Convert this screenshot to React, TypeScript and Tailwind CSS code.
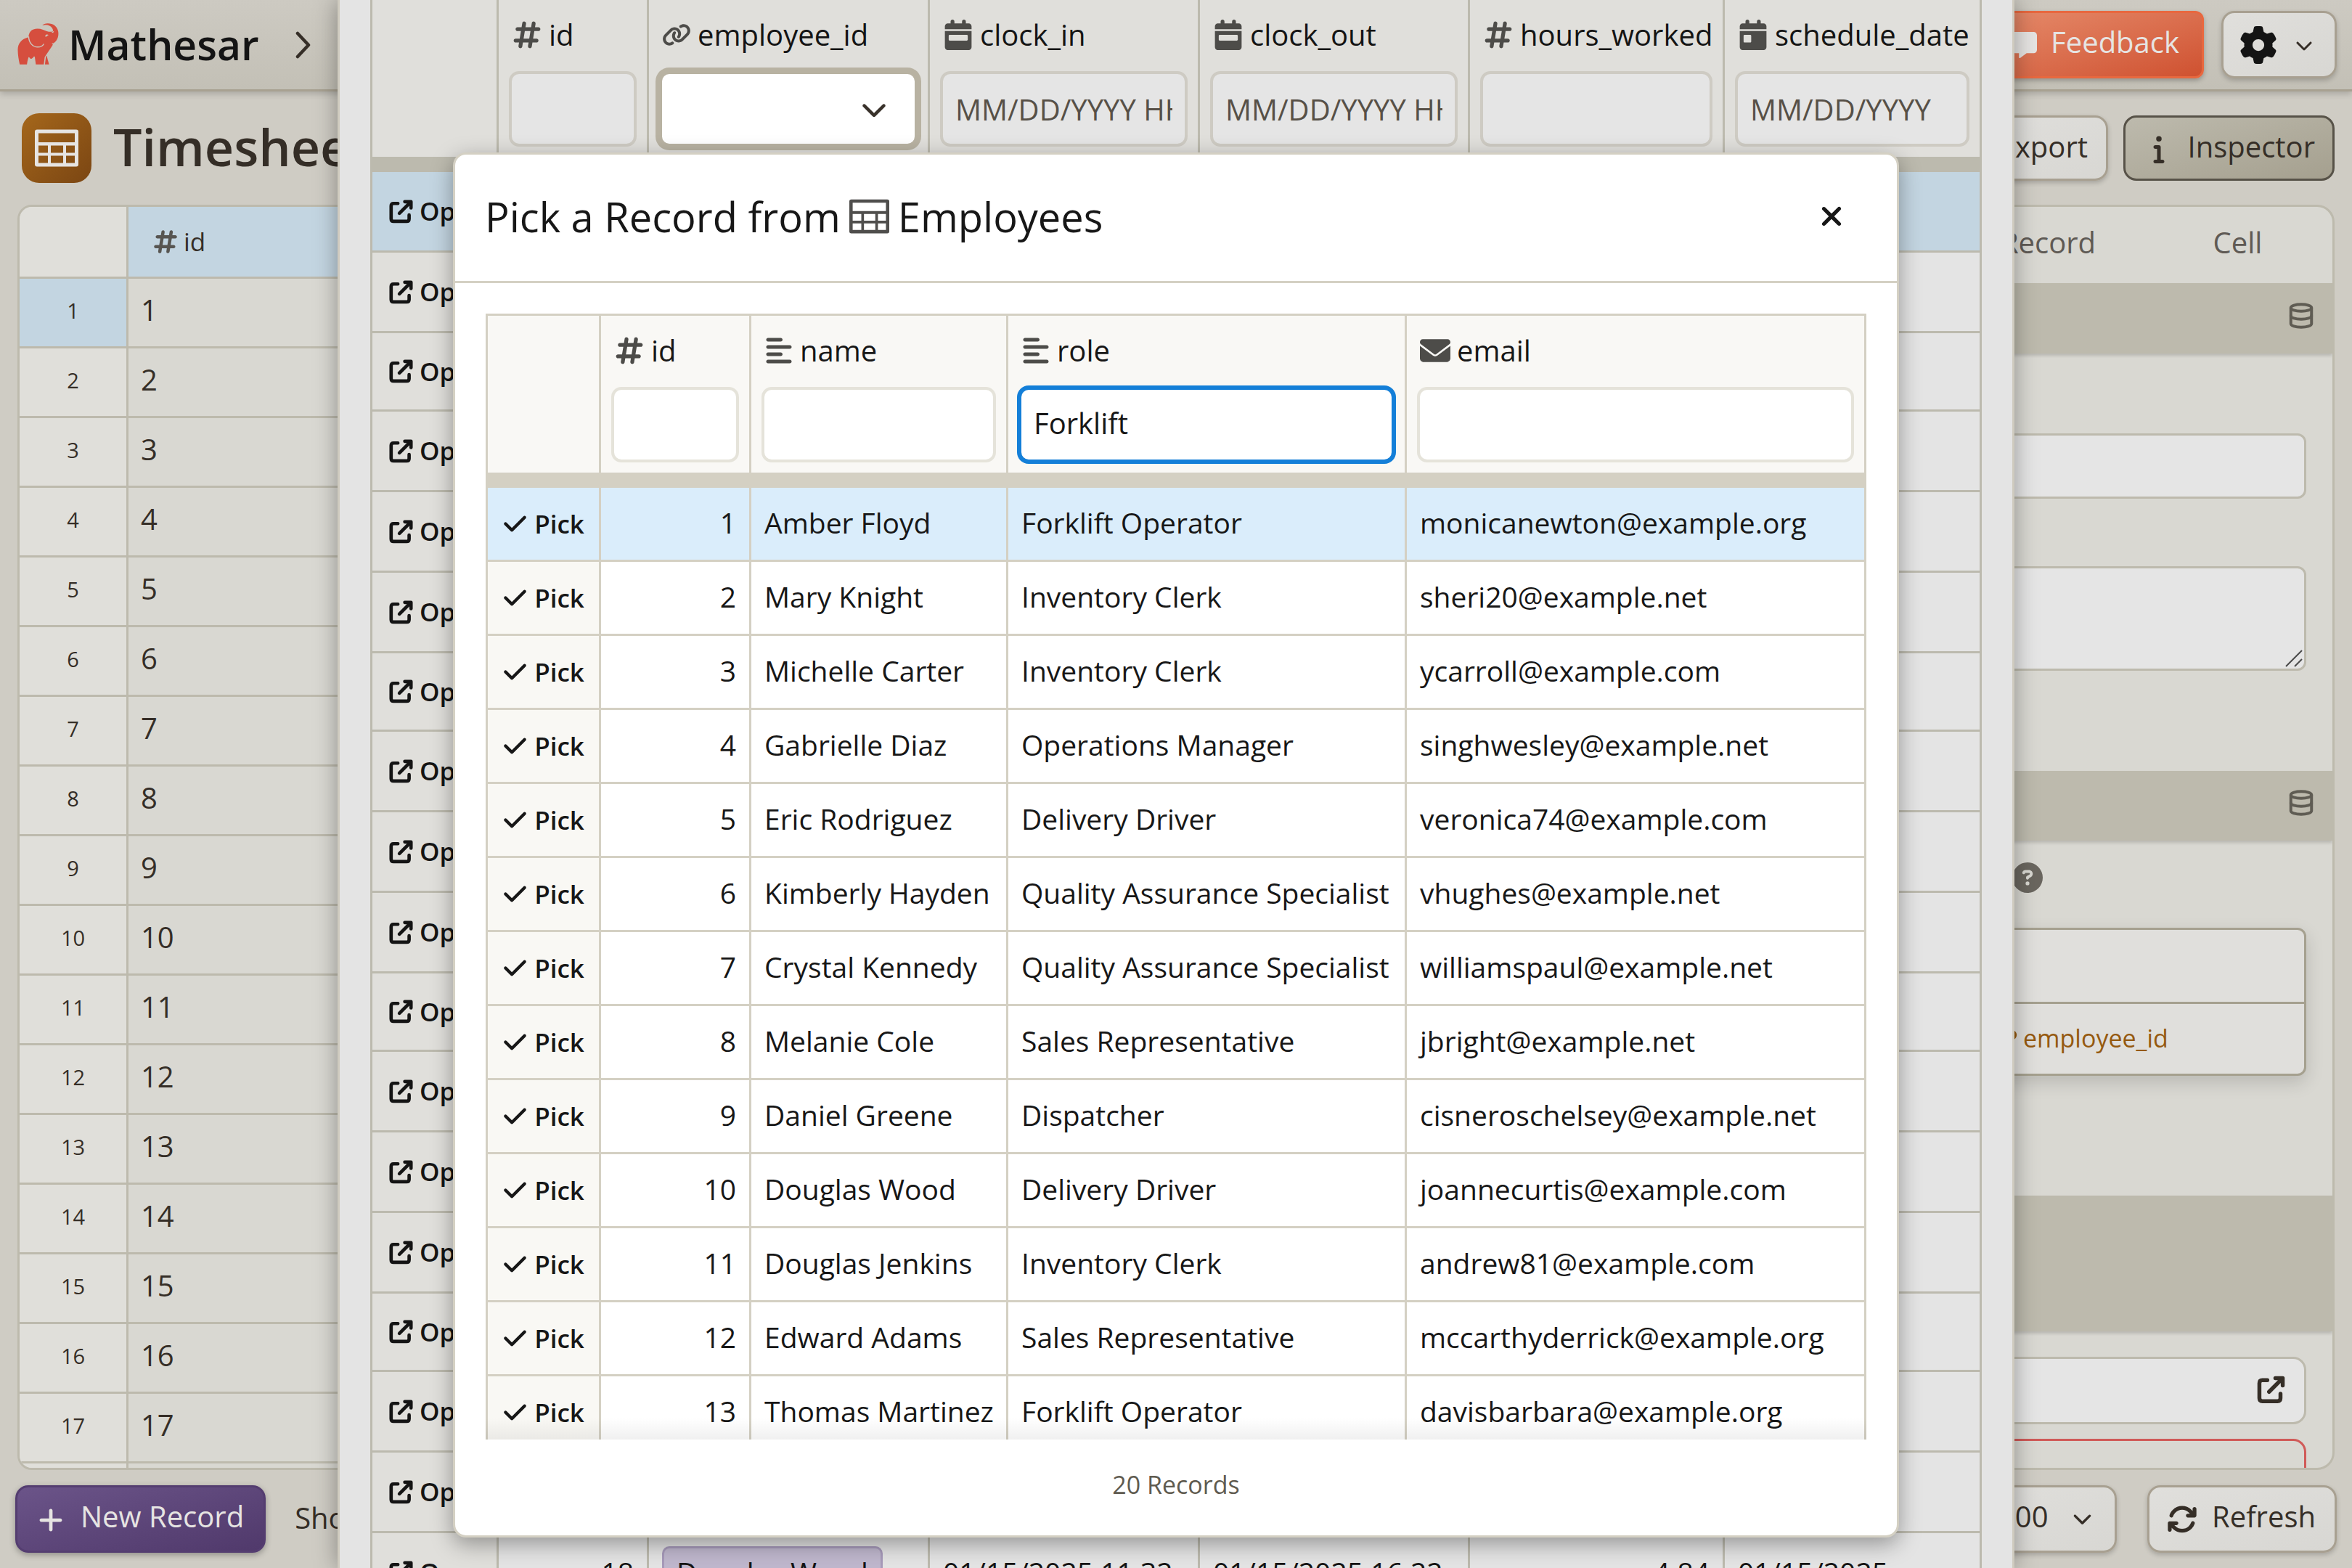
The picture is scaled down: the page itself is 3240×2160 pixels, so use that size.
import type { ReactNode } from "react";
import {
  FaAlignLeft,
  FaArrowsRotate,
  FaCalendarDay,
  FaCalendarWeek,
  FaCheck,
  FaChevronDown,
  FaCircleQuestion,
  FaEnvelope,
  FaGear,
  FaHashtag,
  FaInfo,
  FaLink,
  FaMessage,
  FaPlus,
  FaXmark,
} from "react-icons/fa6";
import { Database } from "lucide-react";

function TableIcon({ className }: { className: string }) {
  return (
    <svg viewBox="0 0 60 51" fill="currentColor" fillRule="evenodd" className={className} aria-hidden="true">
      <path d="M3 0H57Q60 0 60 3V48Q60 51 57 51H3Q0 51 0 48V3Q0 0 3 0ZM5 5V17.5H55V5ZM5 22V32H18V22ZM22 22V32H39V22ZM43 22V32H55V22ZM5 36V46H18V36ZM22 36V46H39V36ZM43 36V46H55V36Z" />
    </svg>
  );
}

function OpenIcon({ className }: { className: string }) {
  return (
    <svg
      viewBox="0 0 24 24"
      fill="none"
      stroke="currentColor"
      strokeWidth="3.2"
      strokeLinecap="round"
      strokeLinejoin="round"
      className={className}
      aria-hidden="true"
    >
      <path d="M9 4.3H5Q2.6 4.3 2.6 6.7V18.8Q2.6 21.2 5 21.2H17.2Q19.6 21.2 19.6 18.8V15.2" />
      <path d="M15.5 2.6H21.4V8.5M21 3L10.4 13.6" />
    </svg>
  );
}

function Elephant() {
  return (
    <svg viewBox="42 38 171 172" className="size-[57px]" aria-hidden="true">
      <path
        fill="#d64e3e"
        d="M87 96C58 104 43 122 43 148C43 170 47 190 51 209H81C82 200 84 190 87 181C90 176 92 184 95 184C98 188 102 184 106 181C110 176 113 174 114 180L118 209H151L155 178C166 162 180 142 189 127L184 122L192 121C208 110 214 92 211 72C207 50 188 38 166 39C157 39 150 42 145 47C164 42 178 47 186 58C190 64 191 70 187 73C174 76 160 70 148 65C128 58 106 60 96 72C89 80 89 88 87 96Z"
      />
      <path fill="#d64e3e" d="M163 173L173 209H156L160 176Z" />
      <path fill="none" stroke="#cbc8c0" strokeWidth="4.5" d="M88 93C89 118 104 137 126 137C138 137 147 132 151 124" />
      <path fill="#cbc8c0" d="M157 90C161 83 168 83 171 88C167 88 163 94 159 95ZM183 76L194 70L190 78Z" />
    </svg>
  );
}

const inputBase = "block h-[104px] w-full rounded-[14px] border-[4px] px-[17px] text-[40px] outline-none";

function Head({
  id,
  name,
  icon,
  children,
}: {
  id: string;
  name: string;
  icon: ReactNode;
  children: ReactNode;
}) {
  return (
    <div className="px-[14px] pb-[14px]">
      <label htmlFor={id} className="mb-[23px] flex h-[54px] items-center gap-[9px] pl-[4px] text-[40px] font-normal whitespace-nowrap">
        <span className="text-[#4d4c49]">{icon}</span>
        {name}
      </label>
      {children}
    </div>
  );
}

const employees = [
  ["Amber Floyd", "Forklift Operator", "monicanewton@example.org"],
  ["Mary Knight", "Inventory Clerk", "sheri20@example.net"],
  ["Michelle Carter", "Inventory Clerk", "ycarroll@example.com"],
  ["Gabrielle Diaz", "Operations Manager", "singhwesley@example.net"],
  ["Eric Rodriguez", "Delivery Driver", "veronica74@example.com"],
  ["Kimberly Hayden", "Quality Assurance Specialist", "vhughes@example.net"],
  ["Crystal Kennedy", "Quality Assurance Specialist", "williamspaul@example.net"],
  ["Melanie Cole", "Sales Representative", "jbright@example.net"],
  ["Daniel Greene", "Dispatcher", "cisneroschelsey@example.net"],
  ["Douglas Wood", "Delivery Driver", "joannecurtis@example.com"],
  ["Douglas Jenkins", "Inventory Clerk", "andrew81@example.com"],
  ["Edward Adams", "Sales Representative", "mccarthyderrick@example.org"],
  ["Thomas Martinez", "Forklift Operator", "davisbarbara@example.org"],
];

const hash = <FaHashtag className="size-[42px]" />;

function PickerDialog() {
  const th = "h-[237px] border-r-[3px] border-b-[21px] border-[#d4d0c3] bg-[#f9f8f5] p-0 text-left align-bottom";
  const td = "h-[102px] border-r-[3px] border-b-[3px] border-[#d4d0c3] px-[18px] pt-0 pb-[4px] whitespace-nowrap";
  const field = inputBase + " border-[#e5e3da] bg-white";
  return (
    <div
      role="dialog"
      aria-labelledby="picker-title"
      className="absolute top-[210px] bottom-[42px] left-1/2 flex w-[1992px] -translate-x-1/2 flex-col rounded-[18px] border-[3px] border-[#d4d0c3] bg-white text-[#171717] shadow-[0_9px_30px_rgba(0,0,0,0.35)]"
    >
      <div className="flex h-[177px] shrink-0 items-center justify-between border-b-[3px] border-[#d4d0c3] pr-[65px] pb-[4px] pl-[41px]">
        <h2 id="picker-title" className="flex items-center gap-[12px] text-[56px] leading-[72px]">
          Pick a Record from
          <TableIcon className="h-[48px] w-[55px] text-[#4f4e4c]" />
          Employees
        </h2>
        <button type="button" aria-label="Close" className="p-1">
          <FaXmark className="size-[42px]" />
        </button>
      </div>
      <div className="relative mx-[42px] mt-[42px] min-h-0 flex-1 overflow-hidden">
        <table className="w-full table-fixed border-separate border-spacing-0 border-t-[3px] border-l-[3px] border-[#d4d0c3] text-[39px] leading-[54px]">
          <colgroup>
            <col className="w-[156px]" />
            <col className="w-[207px]" />
            <col className="w-[354px]" />
            <col className="w-[549px]" />
            <col />
          </colgroup>
          <thead>
            <tr>
              <th className={th} aria-label="Pick" />
              <th className={th}>
                <Head id="emp-id" name="id" icon={hash}>
                  <input id="emp-id" className={field} />
                </Head>
              </th>
              <th className={th}>
                <Head id="emp-name" name="name" icon={<FaAlignLeft className="size-[40px]" />}>
                  <input id="emp-name" className={field} />
                </Head>
              </th>
              <th className={th}>
                <Head id="emp-role" name="role" icon={<FaAlignLeft className="size-[40px]" />}>
                  <input
                    id="emp-role"
                    defaultValue="Forklift"
                    className={inputBase + " border-[#147fd8] bg-white pb-[6px] font-normal ring-2 ring-[#147fd8]"}
                  />
                </Head>
              </th>
              <th className={th}>
                <Head id="emp-email" name="email" icon={<FaEnvelope className="size-[42px]" />}>
                  <input id="emp-email" className={field} />
                </Head>
              </th>
            </tr>
          </thead>
          <tbody>
            {employees.map(([name, role, email], i) => (
              <tr key={email} className={i === 0 ? "bg-[#daedfb]" : "bg-white"}>
                <td className={i === 0 ? "h-[102px] border-r-[3px] border-b-[3px] border-[#d4d0c3] p-0" : "h-[102px] border-r-[3px] border-b-[3px] border-[#d4d0c3] bg-[#f9f8f4] p-0"}>
                  <button type="button" className="mx-auto flex items-center gap-[9px] text-[35px] leading-[48px] font-semibold">
                    <FaCheck className="size-[35px]" />
                    Pick
                  </button>
                </td>
                <td className={td + " text-right"}>{i + 1}</td>
                <td className={td}>{name}</td>
                <td className={td}>{role}</td>
                <td className={td}>{email}</td>
              </tr>
            ))}
          </tbody>
        </table>
        <div className="pointer-events-none absolute inset-x-0 bottom-0 h-[30px] bg-linear-to-t from-black/6 to-transparent" />
      </div>
      <p className="flex h-[132px] shrink-0 items-center justify-center pb-[8px] text-[34px] text-[#5f5b50]">20 Records</p>
    </div>
  );
}

const openRows = Array.from({ length: 18 }, (_, i) => i + 1);

function RecordSelector() {
  const th = "h-[237px] border-r-[3px] border-b-[21px] border-[#bcbaae] bg-[#e0dfdb] p-0 text-left align-bottom";
  const td = "border-r-[3px] border-b-[3px] border-[#bcbaae] px-[18px] py-0 whitespace-nowrap";
  const field = inputBase + " border-[#cecbc3] bg-[#e5e5e5] font-normal placeholder:text-[#575047] placeholder:opacity-100";
  return (
    <section className="absolute inset-y-0 left-1/2 w-[2310px] -translate-x-1/2 overflow-hidden border-x-[3px] border-[#cfcbbf] bg-[#e4e4e4] px-[42px] text-[#141414] shadow-[0_0_30px_rgba(0,0,0,0.35)]">
      <table className="w-full table-fixed border-separate border-spacing-0 border-l-[3px] border-[#bcbaae] text-[39px] leading-[54px]">
        <colgroup>
          <col className="w-[174px]" />
          <col className="w-[207px]" />
          <col className="w-[387px]" />
          <col className="w-[372px]" />
          <col className="w-[372px]" />
          <col className="w-[351px]" />
          <col />
        </colgroup>
        <thead>
          <tr>
            <th className={th} aria-label="Open" />
            <th className={th}>
              <Head id="ts-id" name="id" icon={hash}>
                <input id="ts-id" className={field} />
              </Head>
            </th>
            <th className={th}>
              <Head id="ts-employee" name="employee_id" icon={<FaLink className="size-[40px]" />}>
                <div className="relative">
                  <select
                    id="ts-employee"
                    className="block h-[104px] w-full appearance-none rounded-[14px] border-[4px] border-[#b8b2a2] bg-white ring-[5px] ring-[#b8b2a2] outline-none"
                  />
                  <FaChevronDown className="pointer-events-none absolute top-[34px] right-[42px] size-[36px] text-[#38312a]" />
                </div>
              </Head>
            </th>
            <th className={th}>
              <Head id="ts-in" name="clock_in" icon={<FaCalendarWeek className="size-[42px]" />}>
                <input id="ts-in" placeholder="MM/DD/YYYY HH:MM" className={field} />
              </Head>
            </th>
            <th className={th}>
              <Head id="ts-out" name="clock_out" icon={<FaCalendarWeek className="size-[42px]" />}>
                <input id="ts-out" placeholder="MM/DD/YYYY HH:MM" className={field} />
              </Head>
            </th>
            <th className={th}>
              <Head id="ts-hours" name="hours_worked" icon={hash}>
                <input id="ts-hours" className={field} />
              </Head>
            </th>
            <th className={th}>
              <Head id="ts-date" name="schedule_date" icon={<FaCalendarDay className="size-[42px]" />}>
                <input id="ts-date" placeholder="MM/DD/YYYY" className={field} />
              </Head>
            </th>
          </tr>
        </thead>
        <tbody>
          {openRows.map((n) => {
            const last = n === 18;
            return (
              <tr key={n} className="h-[111px] nth-[4n+3]:h-[108px] first:bg-[#c3d5e1]">
                <td className={n === 1 ? td : td + " bg-[#e0dfdb]"}>
                  <button type="button" className="flex items-center gap-[8px] pl-[4px] text-[35px] leading-[48px] font-semibold">
                    <OpenIcon className="size-[35px]" />
                    Open
                  </button>
                </td>
                <td className={td + " text-right"}>{last && "18"}</td>
                <td className={td}>
                  {last && (
                    <span className="inline-block rounded-[10px] border-[3px] border-[#a79aba] bg-[#bfb7cd] px-[17px] py-[6px]">
                      Douglas Wood
                    </span>
                  )}
                </td>
                <td className={td}>{last && "01/15/2025 11:32"}</td>
                <td className={td}>{last && "01/15/2025 16:22"}</td>
                <td className={td + " text-right"}>{last && "4.84"}</td>
                <td className={td}>{last && "01/15/2025"}</td>
              </tr>
            );
          })}
        </tbody>
      </table>
    </section>
  );
}

const lightButton =
  "flex items-center rounded-[18px] border-[3px] border-[#a8a091] bg-linear-to-br from-[#e0dfdc] to-[#d8d7d3] shadow-[0_3px_6px_rgba(0,0,0,0.2)]";

function Inspector() {
  const bar = "flex shrink-0 items-center justify-end bg-[#bdbaad] pr-[24px] text-[#5f5c53] shadow-[0_3px_4px_rgba(0,0,0,0.15)]";
  return (
    <aside className="flex w-[528px] shrink-0 flex-col overflow-hidden rounded-[24px] border-[3px] border-[#bdbaad] bg-[#d9d8d2]">
      <div role="tablist" className="grid h-[105px] shrink-0 grid-cols-2 text-[40px] text-[#5f5a55]">
        <button type="button" role="tab" className="pb-[8px]">Record</button>
        <button type="button" role="tab" className="pb-[8px]">Cell</button>
      </div>
      <div className={bar + " h-[97px] pb-[8px]"}>
        <Database className="size-[38px]" strokeWidth={2.5} />
      </div>
      <div className="px-[36px]">
        <input
          aria-label="Name"
          className="mt-[110px] block h-[90px] w-full rounded-[12px] border-[3px] border-[#bdbaad] bg-[#e5e5e5]"
        />
        <div className="relative mt-[93px]">
          <textarea
            aria-label="Description"
            className="block h-[144px] w-full resize-none rounded-[12px] border-[3px] border-[#bdbaad] bg-[#e5e5e5]"
          />
          <svg viewBox="0 0 24 24" className="absolute right-[5px] bottom-[5px] size-[24px]" stroke="#4a4a4a" strokeWidth="2" aria-hidden="true">
            <path d="M1 23L23 1M13 23L23 13" />
          </svg>
        </div>
      </div>
      <div className={bar + " mt-[138px] h-[96px] pb-[8px]"}>
        <Database className="size-[38px]" strokeWidth={2.5} />
      </div>
      <div className="px-[36px]">
        <button type="button" aria-label="Help" className="mt-[30px] ml-[45px] block">
          <FaCircleQuestion className="size-[42px] text-[#6a665f]" />
        </button>
        <div className="mt-[48px] flex h-[204px] flex-col rounded-[12px] border-[3px] border-[#a5a08f] bg-[#e0dfdc] shadow-[0_9px_24px_rgba(0,0,0,0.15)]">
          <div className="h-[102px] border-b-[3px] border-[#a5a08f]" />
          <a href="#employee_id" className="flex flex-1 items-center gap-[8px] pb-[2px] pl-[19px] text-[34px] text-[#95590f]">
            <FaLink className="size-[30px]" />
            employee_id
          </a>
        </div>
      </div>
      <div className={bar + " mt-[165px] h-[187px]"} />
      <div className="px-[36px]">
        <div className="mt-[35px] flex h-[93px] items-center justify-end rounded-[18px] border-[3px] border-[#bdbaad] bg-[#e5e5e5] pr-[25px]">
          <button type="button" aria-label="Open record" className="pb-[2px]">
            <OpenIcon className="size-[41px] text-[#352e27]" />
          </button>
        </div>
        <div className="mt-[20px] h-[93px] rounded-[18px] border-[3px] border-[#d05a58]" />
      </div>
    </aside>
  );
}

export default function App() {
  return (
    <div className="relative flex h-screen flex-col overflow-hidden bg-[#cfccc4] font-['Open_Sans',sans-serif] text-[40px] leading-[54px] text-[#352e27]">
      <header className="flex h-[126px] shrink-0 items-center border-b-[3px] border-[#a8a191] bg-linear-to-b from-[#cdcac2] to-[#c3c0b6] pr-[21px] pl-[24px] shadow-[0_3px_9px_rgba(0,0,0,0.2)]">
        <a href="#home" className="flex items-center gap-[13px] pb-[2px] text-[57px] font-semibold text-[#141414]">
          <Elephant />
          Mathesar
        </a>
        <svg viewBox="0 0 22 38" className="ml-[50px] h-[38px] w-[22px]" fill="none" stroke="currentColor" strokeWidth="4.5" strokeLinecap="round" strokeLinejoin="round" aria-hidden="true">
          <path d="M3 3L18 19L3 35" />
        </svg>
        <button
          type="button"
          className="ml-auto flex h-[93px] items-center gap-[19px] rounded-[12px] border-[3px] border-[#e8683f] bg-linear-to-br from-[#e58a6a] to-[#cf5130] pr-[31px] pb-[8px] pl-[28px] text-[#e6e4e2] shadow-[0_3px_6px_rgba(0,0,0,0.25)]"
        >
          <FaMessage className="mt-[8px] size-[36px]" />
          Feedback
        </button>
        <button type="button" aria-label="Settings" className={lightButton + " ml-[24px] h-[93px] w-[159px] justify-between px-[22px]"}>
          <FaGear className="size-[52px] text-[#141414]" />
          <FaChevronDown className="mr-[8px] size-[24px]" />
        </button>
      </header>

      <div className="flex h-[156px] shrink-0 items-center px-[24px]">
        <span className="ml-[6px] flex size-[96px] items-center justify-center rounded-[24px] bg-linear-to-br from-[#a5671b] to-[#7b4613] text-[#e6e4e2]">
          <TableIcon className="h-[52px] w-[60px]" />
        </span>
        <h1 className="ml-[30px] pb-[4px] text-[70px] leading-[90px] font-semibold">Timesheets</h1>
        <button type="button" className={lightButton + " ml-auto h-[90px] pr-[25px] pb-[5px] pl-[48px]"}>
          Export
        </button>
        <button
          type="button"
          className="ml-[21px] flex h-[90px] w-[291px] items-center justify-between rounded-[18px] border-[3px] border-[#575248] bg-linear-to-br from-[#bdbaad] to-[#a5a08f] pr-[24px] pb-[5px] pl-[26px]"
        >
          <FaInfo className="mt-[6px] size-[40px]" />
          Inspector
        </button>
      </div>

      <main className="flex min-h-0 flex-1 gap-[24px] px-[24px]">
        <div className="min-w-0 flex-1 overflow-hidden rounded-[20px] border-[3px] border-[#bdbaad] bg-[#d9d8d2]">
          <table className="w-full table-fixed border-separate border-spacing-0">
            <colgroup>
              <col className="w-[150px]" />
              <col />
            </colgroup>
            <thead>
              <tr>
                <th className="h-[99px] border-r-[3px] border-b-[3px] border-[#bdbaad] bg-[#e0dfda] p-0" aria-label="Row" />
                <th className="h-[99px] border-b-[3px] border-[#bdbaad] bg-[#c3d5e1] py-0 pl-[33px]">
                  <span className="flex items-center gap-[7px] text-[35px] font-normal">
                    <FaHashtag className="size-[36px] text-[#575551]" />
                    id
                  </span>
                </th>
              </tr>
            </thead>
            <tbody>
              {openRows.map((n) => (
                <tr key={n}>
                  <td
                    className={
                      n === 1
                        ? "h-[96px] border-r-[3px] border-b-[3px] border-[#bdbaad] bg-[#c3d5e1] px-0 pt-0 pb-[6px] text-center text-[29px] leading-[40px]"
                        : "h-[96px] border-r-[3px] border-b-[3px] border-[#bdbaad] bg-[#e0dfda] px-0 pt-0 pb-[6px] text-center text-[29px] leading-[40px]"
                    }
                  >
                    {n < 18 && n}
                  </td>
                  <td className="h-[96px] border-b-[3px] border-[#bdbaad] pt-0 pb-[8px] pl-[17px]">{n < 18 && n}</td>
                </tr>
              ))}
            </tbody>
          </table>
        </div>
        <Inspector />
      </main>

      <footer className="flex h-[135px] shrink-0 items-center px-[21px]">
        <button
          type="button"
          className="flex h-[93px] items-center gap-[22px] rounded-[18px] border-[3px] border-[#543d70] bg-linear-to-br from-[#6b5489] to-[#50396b] pr-[27px] pb-[8px] pl-[27px] text-[#e6e4e2] shadow-[0_3px_9px_rgba(0,0,0,0.3)]"
        >
          <FaPlus className="mt-[10px] size-[38px]" />
          New Record
        </button>
        <span className="ml-[40px] pb-[4px]">Showing</span>
        <div className="relative ml-auto">
          <select
            aria-label="Page size"
            defaultValue="500"
            className={lightButton + " h-[93px] w-[216px] appearance-none pb-[8px] pl-[50px]"}
          >
            <option>500</option>
          </select>
          <FaChevronDown className="pointer-events-none absolute top-[32px] right-[34px] size-[27px]" />
        </div>
        <button type="button" className={lightButton + " ml-[42px] h-[93px] w-[261px] justify-between pr-[26px] pb-[7px] pl-[24px]"}>
          <FaArrowsRotate className="mt-[7px] size-[42px]" />
          Refresh
        </button>
      </footer>

      <RecordSelector />
      <PickerDialog />
    </div>
  );
}
